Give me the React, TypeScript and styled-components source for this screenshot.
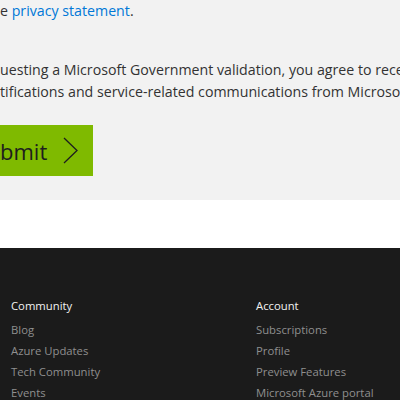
import React from "react";
import styled, { createGlobalStyle } from "styled-components";

const GlobalStyle = createGlobalStyle`
  html, body { margin: 0; padding: 0; background: #ffffff; }
  body { font-family: "Open Sans", "Noto Sans", "Liberation Sans", sans-serif; }
  * { box-sizing: border-box; }
`;

const Page = styled.div`
  width: 400px;
  height: 400px;
  overflow: hidden;
  display: flex;
  flex-direction: column;
`;

const FormSection = styled.section`
  background: #f2f2f2;
  height: 200px;
  flex-shrink: 0;
  display: flex;
  flex-direction: column;
`;

const Paragraph = styled.p<{ $top: number }>`
  margin: ${(p) => p.$top}px 0 0 0;
  font-size: 14.2px;
  line-height: 22px;
  color: #333333;
  white-space: nowrap;
`;

const Link = styled.a`
  color: #0078d7;
  text-decoration: none;
`;

const SubmitButton = styled.button`
  margin-top: 22px;
  width: 93px;
  height: 51px;
  background: #7fba00;
  border: none;
  padding: 0;
  display: flex;
  align-items: center;
  gap: 16px;
  font-family: "Open Sans", "Noto Sans", sans-serif;
  font-size: 22px;
  color: #1e1e1e;
  cursor: pointer;
`;

const Gap = styled.div`
  height: 48px;
  flex-shrink: 0;
  background: #ffffff;
`;

const Footer = styled.footer`
  flex: 1;
  background: #1b1b1b;
  padding: 49px 0 0 11px;
  display: grid;
  grid-template-columns: 245px 1fr;
`;

const Column = styled.div`
  display: flex;
  flex-direction: column;
`;

const ColumnTitle = styled.h3`
  margin: 0 0 4px 0;
  font-size: 11.3px;
  font-weight: 400;
  line-height: 18px;
  color: #f2f2f2;
`;

const FooterLink = styled.a`
  font-size: 11.3px;
  line-height: 21px;
  color: #8f8f8f;
  text-decoration: none;
`;

const Chevron = () => (
  <svg width="16" height="28" viewBox="0 0 16 28" fill="none">
    <path d="M1 1 L14 13.5 L1 26" stroke="#1e1e1e" strokeWidth="1.3" />
  </svg>
);

export default function App() {
  return (
    <>
      <GlobalStyle />
      <Page>
        <FormSection>
          <Paragraph $top={0}>
            e <Link href="#">privacy statement</Link>.
          </Paragraph>
          <Paragraph $top={37}>
            uesting a Microsoft Government validation, you agree to receive
            <br />
            tifications and service-related communications from Microsoft.
          </Paragraph>
          <SubmitButton>
            <span>bmit</span>
            <Chevron />
          </SubmitButton>
        </FormSection>
        <Gap />
        <Footer>
          <Column>
            <ColumnTitle>Community</ColumnTitle>
            <FooterLink href="#">Blog</FooterLink>
            <FooterLink href="#">Azure Updates</FooterLink>
            <FooterLink href="#">Tech Community</FooterLink>
            <FooterLink href="#">Events</FooterLink>
          </Column>
          <Column>
            <ColumnTitle>Account</ColumnTitle>
            <FooterLink href="#">Subscriptions</FooterLink>
            <FooterLink href="#">Profile</FooterLink>
            <FooterLink href="#">Preview Features</FooterLink>
            <FooterLink href="#">Microsoft Azure portal</FooterLink>
          </Column>
        </Footer>
      </Page>
    </>
  );
}
